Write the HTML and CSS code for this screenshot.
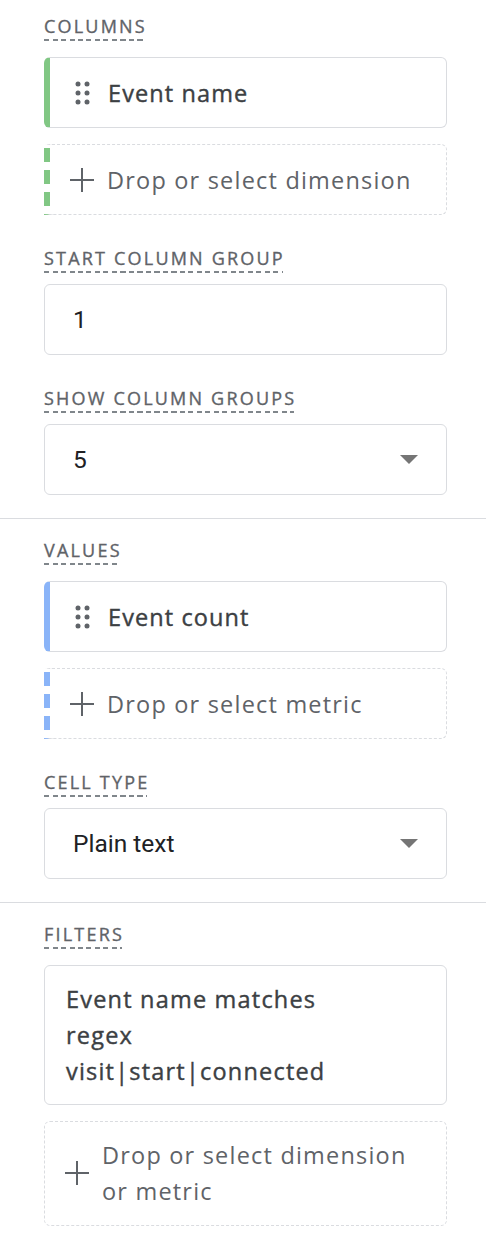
FILE: index.html
```html
<!DOCTYPE html>
<html lang="en">
<head>
    <meta charset="UTF-8">
    <meta name="viewport" content="width=device-width, initial-scale=1.0">
    <title>Table settings</title>
    <link rel="stylesheet" href="styles.css">
</head>
<body>
    <div class="panel">
        <section class="group group-first">
            <div class="field">
                <span class="label">Columns</span>
                <div class="list">
                    <div class="chip chip-green">
                        <svg class="handle" width="20" height="24" viewBox="0 0 20 24">
                            <circle cx="4" cy="3" r="2.5"/><circle cx="13" cy="3" r="2.5"/>
                            <circle cx="4" cy="12" r="2.5"/><circle cx="13" cy="12" r="2.5"/>
                            <circle cx="4" cy="21" r="2.5"/><circle cx="13" cy="21" r="2.5"/>
                        </svg>
                        <span class="chip-text">Event name</span>
                    </div>
                    <div class="drop drop-green">
                        <svg class="plus" width="24" height="24" viewBox="0 0 24 24"><path d="M12 0v24M0 12h24"/></svg>
                        <span class="drop-text">Drop or select dimension</span>
                    </div>
                </div>
            </div>
            <div class="field">
                <span class="label">Start column group</span>
                <div class="box">1</div>
            </div>
            <div class="field">
                <span class="label">Show column groups</span>
                <div class="box select">
                    <span>5</span>
                    <svg class="caret" width="18" height="9" viewBox="0 0 18 9"><path d="M0 0h18L9 9z"/></svg>
                </div>
            </div>
        </section>

        <section class="group">
            <div class="field">
                <span class="label">Values</span>
                <div class="list">
                    <div class="chip chip-blue">
                        <svg class="handle" width="20" height="24" viewBox="0 0 20 24">
                            <circle cx="4" cy="3" r="2.5"/><circle cx="13" cy="3" r="2.5"/>
                            <circle cx="4" cy="12" r="2.5"/><circle cx="13" cy="12" r="2.5"/>
                            <circle cx="4" cy="21" r="2.5"/><circle cx="13" cy="21" r="2.5"/>
                        </svg>
                        <span class="chip-text">Event count</span>
                    </div>
                    <div class="drop drop-blue">
                        <svg class="plus" width="24" height="24" viewBox="0 0 24 24"><path d="M12 0v24M0 12h24"/></svg>
                        <span class="drop-text">Drop or select metric</span>
                    </div>
                </div>
            </div>
            <div class="field">
                <span class="label">Cell type</span>
                <div class="box select">
                    <span>Plain text</span>
                    <svg class="caret" width="18" height="9" viewBox="0 0 18 9"><path d="M0 0h18L9 9z"/></svg>
                </div>
            </div>
        </section>

        <section class="group group-last">
            <div class="field">
                <span class="label">Filters</span>
                <div class="list">
                    <div class="filter">
                        <p class="filter-text">Event name matches regex visit|start|connected</p>
                    </div>
                    <div class="drop drop-tall">
                        <svg class="plus" width="24" height="24" viewBox="0 0 24 24"><path d="M12 0v24M0 12h24"/></svg>
                        <span class="drop-text">Drop or select dimension or metric</span>
                    </div>
                </div>
            </div>
        </section>
    </div>
</body>
</html>
```

FILE: styles.css
```css
body {
    margin: 0;
    font-family: "Open Sans", "Noto Sans", sans-serif;
    color: #3c4043;
    background: #fff;
}

.panel {
    width: 486px;
}

.group {
    padding: 19px 39px 23px 44px;
    border-bottom: 1px solid #dadce0;
}

.group-first {
    padding-top: 14px;
}

.group-last {
    border-bottom: none;
    padding-bottom: 19px;
}

.field {
    display: flex;
    flex-direction: column;
    align-items: flex-start;
}

.field + .field {
    margin-top: 31px;
}

/* section labels with the dotted underline */
.label {
    display: inline-block;
    font-size: 18px;
    line-height: 24px;
    font-weight: 400;
    -webkit-text-stroke: 0.35px #5f6368;
    letter-spacing: 2.2px;
    margin-right: -2.2px;
    text-transform: uppercase;
    color: #5f6368;
    padding-bottom: 3px;
    margin-bottom: 11px;
    background: repeating-linear-gradient(to right, #80868b 0 5px, transparent 5px 8.5px) left bottom / calc(100% - 2px) 2px no-repeat;
}

.list {
    align-self: stretch;
    display: flex;
    flex-direction: column;
    gap: 16px;
    margin-top: 5px;
}

.chip {
    display: flex;
    align-items: center;
    height: 69px;
    padding-left: 24px;
    border: 1px solid #dadce0;
    border-left-width: 6px;
    border-radius: 6px;
}

.chip-green {
    border-left-color: #81c784;
}

.chip-blue {
    border-left-color: #8ab4f8;
}

.handle {
    fill: #5f6368;
    flex: none;
    margin-right: 14px;
}

.chip-text {
    font-size: 23.5px;
    font-weight: 400;
    -webkit-text-stroke: 0.4px #3c4043;
    letter-spacing: 1.1px;
    color: #3c4043;
}

.drop {
    display: flex;
    align-items: center;
    height: 69px;
    padding-left: 20px;
    border: 1px dashed #dadce0;
    border-radius: 6px;
}

.drop-green,
.drop-blue {
    border-left: 6px solid transparent;
    border-radius: 0 6px 6px 0;
    background-origin: border-box;
    background-size: 6px 100%;
    background-position: 0 4px;
    background-repeat: no-repeat;
}

.drop-green {
    background-image: repeating-linear-gradient(to bottom, #81c784 0 14px, transparent 14px 22px);
}

.drop-blue {
    background-image: repeating-linear-gradient(to bottom, #8ab4f8 0 14px, transparent 14px 22px);
}

.drop-tall {
    height: auto;
    padding-top: 15px;
    padding-bottom: 16px;
}

.plus {
    flex: none;
    stroke: #5f6368;
    stroke-width: 2;
    margin-right: 13px;
}

.drop-text {
    font-size: 23.5px;
    line-height: 36px;
    letter-spacing: 1.2px;
    color: #5f6368;
    max-width: 320px;
}

.box {
    align-self: stretch;
    display: flex;
    align-items: center;
    height: 69px;
    padding: 0 28px 0 28px;
    border: 1px solid #dadce0;
    border-radius: 6px;
    font-family: Roboto, "Liberation Sans", sans-serif;
    font-size: 24.5px;
    color: #202124;
}

.select {
    justify-content: space-between;
}

.caret {
    fill: #757575;
}

.filter {
    padding: 15px 22px 15px 21px;
    border: 1px solid #dadce0;
    border-radius: 6px;
}

.filter-text {
    margin: 0;
    max-width: 300px;
    font-size: 23.5px;
    line-height: 36px;
    font-weight: 400;
    -webkit-text-stroke: 0.4px #3c4043;
    letter-spacing: 1.2px;
    color: #3c4043;
}
```
